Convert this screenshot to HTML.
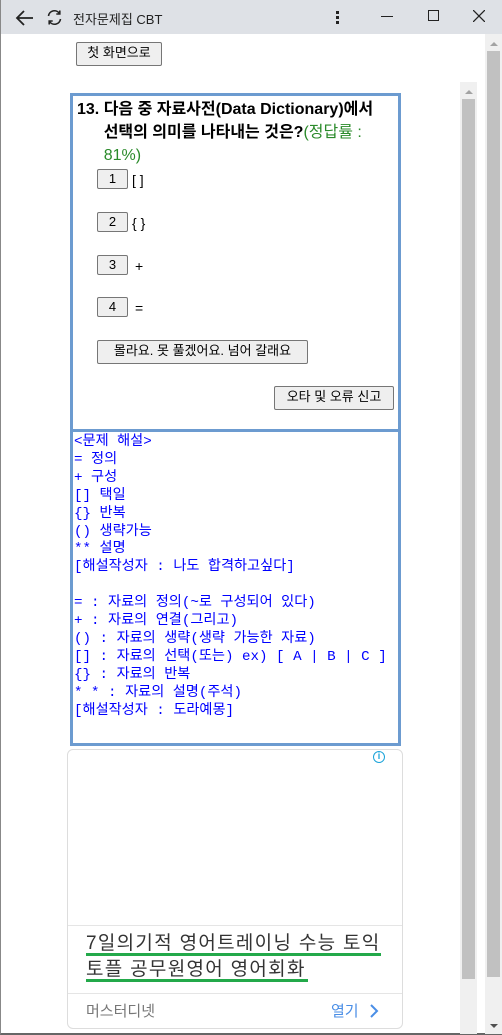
<!DOCTYPE html>
<html><head><meta charset="utf-8">
<style>
*{box-sizing:border-box;margin:0;padding:0}
body{width:502px;height:1035px;overflow:hidden;background:#fff;position:relative;font-family:"Liberation Sans","Noto Sans CJK KR",sans-serif;border-left:1px solid #888;border-right:1px solid #888;border-bottom:2px solid #666}
.bar{position:absolute;left:0;top:0;width:502px;height:34px;background:#dee1e6}
.abs{position:absolute}
.btn{position:absolute;background:#efefef;border:1px solid #767676;border-radius:2px;font-size:13px;color:#000;text-align:center;line-height:20px;white-space:nowrap}
.box{position:absolute;left:69px;top:93px;width:331px;height:653px;border:3px solid #6c9bd0}
.q{position:absolute;left:76px;top:98px;width:320px;font-size:16px;font-weight:bold;line-height:23px;color:#000;word-break:keep-all}
.ex{position:absolute;left:73px;top:434px;font-family:"Liberation Mono","Noto Sans CJK KR",monospace;font-size:14.2px;line-height:17.9px;color:#0000ff;white-space:pre}
.opt{position:absolute;left:131px;font-size:14px;color:#000}
</style></head><body>
<div class="bar"></div>
<svg class="abs" style="left:14px;top:9px" width="20" height="18" viewBox="0 0 20 18"><path d="M18 9H3M9 2L2 9l7 7" stroke="#222" stroke-width="1.8" fill="none"/></svg>
<svg class="abs" style="left:45px;top:9px" width="17" height="17" viewBox="0 0 17 17"><path d="M2.5 7A6 6 0 0 1 13.5 4.5M14.5 10A6 6 0 0 1 3.5 12.5M13.8 1.5v3.5h-3.5M3.2 15.5V12h3.5" stroke="#222" stroke-width="1.6" fill="none"/></svg>
<div class="abs" style="left:72px;top:9px;font-size:13px;color:#222">전자문제집 CBT</div>
<div class="abs" style="left:335px;top:11px;width:3px;height:3px;background:#222;box-shadow:0 5px #222,0 10px #222"></div>
<div class="abs" style="left:380px;top:16px;width:12px;height:1px;background:#222"></div>
<div class="abs" style="left:427px;top:10px;width:11px;height:11px;border:1.3px solid #222"></div>
<svg class="abs" style="left:472px;top:10px" width="12" height="12"><path d="M0 0L12 12M12 0L0 12" stroke="#222" stroke-width="1.3"/></svg>

<div class="abs" style="left:484px;top:34px;width:17px;height:1000px;background:#f0f0f0"></div>
<div class="abs" style="left:486px;top:51px;width:13px;height:926px;background:#c1c1c1"></div>
<div class="abs" style="left:489px;top:42px;border:4px solid transparent;border-bottom:4px solid #a3a3a3;border-top:0"></div>
<div class="abs" style="left:489px;top:1024px;border:4px solid transparent;border-top:4px solid #505050;border-bottom:0"></div>
<div class="abs" style="left:459px;top:82px;width:17px;height:952px;background:#f0f0f0"></div>
<div class="abs" style="left:461px;top:99px;width:13px;height:880px;background:#c1c1c1"></div>
<div class="abs" style="left:464px;top:90px;border:4px solid transparent;border-bottom:4px solid #a3a3a3;border-top:0"></div>

<div class="btn" style="left:75px;top:42px;width:86px;height:24px">첫 화면으로</div>

<div class="box"></div>
<div class="abs" style="left:72px;top:429px;width:325px;height:3px;background:#6c9bd0"></div>
<div class="q">13.&nbsp;<span style="display:inline-block;vertical-align:top;width:285px">다음 중 자료사전(Data Dictionary)에서 선택의 의미를 나타내는 것은?<span style="color:#2a8a2a;font-weight:normal">(정답률 : 81%)</span></span></div>

<div class="btn" style="left:96px;top:169px;width:31px;height:20px;line-height:18px">1</div><div class="opt" style="top:172px">[ ]</div>
<div class="btn" style="left:96px;top:212px;width:31px;height:20px;line-height:18px">2</div><div class="opt" style="top:215px">{ }</div>
<div class="btn" style="left:96px;top:255px;width:31px;height:20px;line-height:18px">3</div><div class="opt" style="top:258px;left:134px">+</div>
<div class="btn" style="left:96px;top:297px;width:31px;height:20px;line-height:18px">4</div><div class="opt" style="top:300px;left:134px">=</div>
<div class="btn" style="left:96px;top:340px;width:211px;height:24px">몰라요. 못 풀겠어요. 넘어 갈래요</div>
<div class="btn" style="left:273px;top:386px;width:120px;height:24px">오타 및 오류 신고</div>

<div class="ex">&lt;문제 해설&gt;
= 정의
+ 구성
[] 택일
{} 반복
() 생략가능
** 설명
[해설작성자 : 나도 합격하고싶다]

= : 자료의 정의(~로 구성되어 있다)
+ : 자료의 연결(그리고)
() : 자료의 생략(생략 가능한 자료)
[] : 자료의 선택(또는) ex) [ A | B | C ]
{} : 자료의 반복
* * : 자료의 설명(주석)
[해설작성자 : 도라예몽]</div>

<div class="abs" style="left:66px;top:749px;width:336px;height:280px;border:1px solid #ddd;border-radius:6px"></div>
<div class="abs" style="left:372px;top:751px;width:12px;height:12px;border:1.5px solid #1aa3d9;border-radius:50%;color:#1aa3d9;font-size:9px;font-weight:bold;text-align:center;line-height:9px">i</div>
<div class="abs" style="left:67px;top:925px;width:334px;height:1px;background:#e5e5e5"></div>
<div class="abs" style="left:67px;top:993px;width:334px;height:1px;background:#e5e5e5"></div>
<div class="abs" style="left:85px;top:931px;font-size:19px;letter-spacing:1.3px;line-height:26px;color:#333;width:320px;white-space:nowrap">7일의기적 영어트레이닝 수능 토익<br>토플 공무원영어 영어회화</div>
<div class="abs" style="left:85px;top:953px;width:295px;height:3px;background:#23a94a"></div>
<div class="abs" style="left:85px;top:979px;width:222px;height:3px;background:#23a94a"></div>
<div class="abs" style="left:85px;top:1000px;font-size:15px;color:#777">머스터디넷</div>
<div class="abs" style="left:330px;top:1000px;font-size:15px;color:#4a8ee6">열기</div>
<svg class="abs" style="left:368px;top:1004px" width="10" height="14"><path d="M2 1l6 6-6 6" stroke="#4a8ee6" stroke-width="2" fill="none"/></svg>
</body></html>
